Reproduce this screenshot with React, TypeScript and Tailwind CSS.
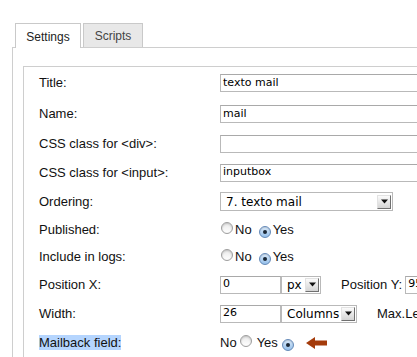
import type { ReactNode } from "react";

function Radio({ checked }: { checked?: boolean }) {
  if (checked) {
    return (
      <span className="inline-flex h-[12px] w-[12px] shrink-0 items-center justify-center rounded-full border border-[#6389b8] bg-linear-to-b from-[#dcebfa] to-[#94bfea] shadow-[inset_0_1px_1px_rgba(0,0,0,0.15)]">
        <span className="h-[4px] w-[4px] rounded-full bg-[#1b2736]" />
      </span>
    );
  }
  return (
    <span className="inline-block h-[12px] w-[12px] shrink-0 rounded-full border border-[#9d9d9d] bg-linear-to-b from-[#e9e9e9] to-[#ffffff] shadow-[inset_0_1px_2px_rgba(0,0,0,0.18)]" />
  );
}

function TextInput({ value, width }: { value?: string; width: string }) {
  return (
    <div
      className={`flex h-[18px] shrink-0 items-center border border-[#b9b9b9] border-t-[#a9a9a9] bg-white pl-[2px] font-['DejaVu_Sans',sans-serif] text-[11px] text-black ${width}`}
    >
      {value}
    </div>
  );
}

function Select({ value, width, tall }: { value: string; width: string; tall?: boolean }) {
  return (
    <div
      className={`flex shrink-0 items-center border border-[#b9b9b9] bg-white pl-[5px] pr-[1px] font-['DejaVu_Sans',sans-serif] text-[12px] text-black ${
        tall ? "h-[19px]" : "h-[18px]"
      } ${width}`}
    >
      <span className="flex-1 whitespace-nowrap">{value}</span>
      <span className="flex h-[14px] w-[14px] items-center justify-center border border-[#e2e2e2] border-r-[#707070] border-b-[#707070] bg-linear-to-b from-[#fbfbfb] to-[#d4d4d4]">
        <svg width="7" height="5" viewBox="0 0 7 5">
          <path d="M0 0.5h7L3.5 4.5z" fill="#111" />
        </svg>
      </span>
    </div>
  );
}

function Row({ label, height, children }: { label: ReactNode; height: string; children: ReactNode }) {
  return (
    <div className={`flex items-center ${height}`}>
      <div className="w-[181px] shrink-0 text-[13px] text-[#111]">{label}</div>
      <div className="flex items-center whitespace-nowrap">{children}</div>
    </div>
  );
}

function YesNo() {
  return (
    <div className="flex items-center text-[13px] text-[#111]">
      <span className="ml-[1px]">
        <Radio />
      </span>
      <span className="ml-[2px]">No</span>
      <span className="ml-[7px]">
        <Radio checked />
      </span>
      <span className="ml-[2px]">Yes</span>
    </div>
  );
}

export default function App() {
  return (
    <div className="h-[357px] w-[417px] overflow-hidden bg-white pl-[12px] pt-[23px] font-['Liberation_Sans',Arial,sans-serif]">
      {/* Tabs */}
      <div className="relative z-10 -mb-px flex pl-[3px] text-[12px]">
        <div className="flex h-[25px] w-[66px] items-center justify-center border border-b-0 border-[#c9c9c9] bg-white pt-[1px] text-[#222]">
          Settings
        </div>
        <div className="ml-[2px] flex h-[24px] w-[60px] items-center justify-center border border-b-0 border-[#c9c9c9] bg-[#e8e8e8] pt-[1px] text-[#444]">
          Scripts
        </div>
      </div>

      {/* Panel */}
      <div className="h-[400px] w-[500px] border-l border-t border-[#cecece] pl-[10px] pt-[18px]">
        <div className="h-[400px] w-[500px] border-l border-t border-[#cecece] pl-[15px]">
          <Row label="Title:" height="h-[32px]">
            <TextInput value="texto mail" width="w-[230px]" />
          </Row>
          <Row label="Name:" height="h-[30px]">
            <TextInput value="mail" width="w-[230px]" />
          </Row>
          <Row label="CSS class for <div>:" height="h-[29px]">
            <TextInput width="w-[230px]" />
          </Row>
          <Row label="CSS class for <input>:" height="h-[29px]">
            <TextInput value="inputbox" width="w-[230px]" />
          </Row>
          <Row label="Ordering:" height="h-[29px]">
            <Select value="7. texto mail" width="w-[173px]" tall />
          </Row>
          <Row label="Published:" height="h-[27px]">
            <YesNo />
          </Row>
          <Row label="Include in logs:" height="h-[27px]">
            <YesNo />
          </Row>
          <Row label="Position X:" height="h-[29px]">
            <TextInput value="0" width="w-[61px]" />
            <Select value="px" width="w-[40px]" />
            <span className="ml-[20px] text-[13px] text-[#111]">Position Y:</span>
            <span className="ml-[3px]">
              <TextInput value="95" width="w-[60px]" />
            </span>
          </Row>
          <Row label="Width:" height="h-[29px]">
            <TextInput value="26" width="w-[61px]" />
            <Select value="Columns" width="w-[76px]" />
            <span className="ml-[20px] text-[13px] text-[#111]">Max.Length:</span>
          </Row>
          <Row
            label={<span className="inline-block bg-[#b5d5fe] leading-[15px]">Mailback field:</span>}
            height="h-[29px]"
          >
            <div className="flex items-center text-[13px] text-[#111]">
              <span>No</span>
              <span className="ml-[3px]">
                <Radio />
              </span>
              <span className="ml-[5px]">Yes</span>
              <span className="ml-[4px]">
                <Radio checked />
              </span>
              <svg className="ml-[12px]" width="22" height="12" viewBox="0 0 22 12">
                <path d="M0 6L9 0V3.5H21V8.5H9V12Z" fill="#a43b0b" />
              </svg>
            </div>
          </Row>
        </div>
      </div>
    </div>
  );
}
